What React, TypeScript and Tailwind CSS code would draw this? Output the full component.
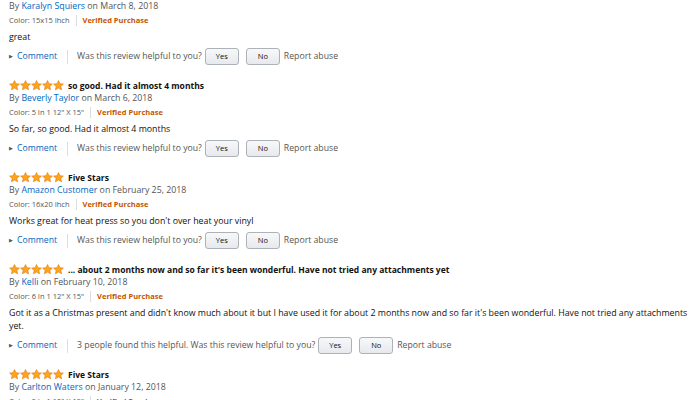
import { Fragment } from 'react';

type Review = {
  title?: string;
  author: string;
  date: string;
  color: string;
  body?: string;
  helpful?: string;
  partial?: boolean;
};

const reviews: Review[] = [
  {
    author: 'Karalyn Squiers',
    date: 'March 8, 2018',
    color: '15x15 Ihch',
    body: 'great',
    partial: true,
  },
  {
    title: 'so good. Had it almost 4 months',
    author: 'Beverly Taylor',
    date: 'March 6, 2018',
    color: '5 In 1 12" X 15"',
    body: 'So far, so good. Had it almost 4 months',
  },
  {
    title: 'Five Stars',
    author: 'Amazon Customer',
    date: 'February 25, 2018',
    color: '16x20 Ihch',
    body: "Works great for heat press so you don't over heat your vinyl",
  },
  {
    title: "... about 2 months now and so far it's been wonderful. Have not tried any attachments yet",
    author: 'Kelli',
    date: 'February 10, 2018',
    color: '6 In 1 12" X 15"',
    body: "Got it as a Christmas present and didn't know much about it but I have used it for about 2 months now and so far it's been wonderful. Have not tried any attachments yet.",
    helpful: '3 people found this helpful. ',
  },
  {
    title: 'Five Stars',
    author: 'Carlton Waters',
    date: 'January 12, 2018',
    color: '5 In 1 12" X 15"',
  },
];

function Star() {
  return (
    <svg width="11" height="11" viewBox="0 0 24 24" className="shrink-0">
      <path
        d="M12 1.2l3.2 6.9 7.5.8-5.6 5.1 1.6 7.4L12 17.6l-6.7 3.8 1.6-7.4-5.6-5.1 7.5-.8z"
        fill="#ffa41c"
        stroke="#de7a0b"
        strokeWidth="1.3"
        strokeLinejoin="round"
      />
    </svg>
  );
}

function Btn({ label }: { label: string }) {
  return (
    <button className="h-[17px] w-[34px] rounded-[3px] border border-[#adb1b8] bg-gradient-to-b from-[#f7f8fa] to-[#e7e9ec] text-[7.5px] leading-none text-[#111]">
      {label}
    </button>
  );
}

function ReviewBlock({ r }: { r: Review }) {
  return (
    <div className="pb-[13px]">
      {!r.partial && (
        <div className="flex h-[13px] items-center">
          <div className="flex">
            {[0, 1, 2, 3, 4].map((i) => (
              <Star key={i} />
            ))}
          </div>
          <span className="ml-[4px] text-[8.5px] font-bold leading-[13px] text-[#111]">{r.title}</span>
        </div>
      )}
      <div className="h-[13px] text-[8.8px] leading-[13px] text-[#555]">
        By <span className="text-[#0066c0]">{r.author}</span> on {r.date}
      </div>
      <div className="mt-[1px] flex h-[13px] items-center leading-[13px]">
        <span className="text-[7.5px] text-[#555]">Color: {r.color}</span>
        <span className="mx-[6px] h-[11px] w-px bg-[#ddd]" />
        <span className="text-[7.5px] font-bold text-[#c45500]">Verified Purchase</span>
      </div>
      {r.body && (
        <Fragment>
          <p className="mt-[4px] text-[8.8px] leading-[13px] text-[#111]">{r.body}</p>
          <div className="mt-[4px] flex h-[18px] items-center text-[8.7px] text-[#555]">
            <span className="mr-[4px] text-[5px] text-[#555]">▶</span>
            <span className="text-[#0066c0]">Comment</span>
            <span className="ml-[10px] mr-[9px] h-[14px] w-px bg-[#ddd]" />
            <span>
              {r.helpful}
              Was this review helpful to you?
            </span>
            <span className="ml-[3px] flex gap-[7px]">
              <Btn label="Yes" />
              <Btn label="No" />
            </span>
            <span className="ml-[4px]">Report abuse</span>
          </div>
        </Fragment>
      )}
    </div>
  );
}

export default function App() {
  return (
    <div className="h-[400px] w-[698px] overflow-hidden bg-white pl-[9px] pr-[4px] font-['Open_Sans',sans-serif]">
      <div className="-mt-[0.5px]">
        {reviews.map((r, i) => (
          <ReviewBlock key={i} r={r} />
        ))}
      </div>
    </div>
  );
}
